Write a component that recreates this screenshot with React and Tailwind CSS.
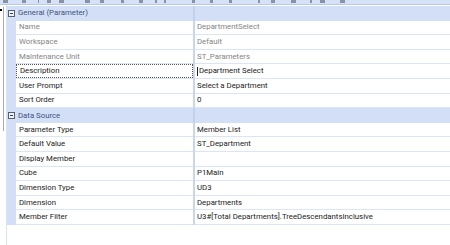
import React from 'react'

const sections = [
  {
    title: 'General (Parameter)',
    rows: [
      { label: 'Name', value: 'DepartmentSelect', readOnly: true },
      { label: 'Workspace', value: 'Default', readOnly: true },
      { label: 'Maintenance Unit', value: 'ST_Parameters', readOnly: true },
      { label: 'Description', value: 'Department Select', focused: true },
      { label: 'User Prompt', value: 'Select a Department' },
      { label: 'Sort Order', value: '0' },
    ],
  },
  {
    title: 'Data Source',
    rows: [
      { label: 'Parameter Type', value: 'Member List' },
      { label: 'Default Value', value: 'ST_Department' },
      { label: 'Display Member', value: '' },
      { label: 'Cube', value: 'P1Main' },
      { label: 'Dimension Type', value: 'UD3' },
      { label: 'Dimension', value: 'Departments' },
      { label: 'Member Filter', value: 'U3#[Total Departments].TreeDescendantsInclusive' },
    ],
  },
]

// bottoms of the toolbar icons that peek in at the top edge
const toolbarBits = [
  [3, 5], [22, 4], [38, 1], [47, 4], [59, 5], [85, 5], [100, 4], [121, 3], [139, 4],
  [155, 2], [164, 2], [192, 3], [210, 3], [229, 3], [258, 2], [271, 4], [291, 5],
  [310, 2], [320, 5], [340, 5],
]

const CollapseIcon = () => (
  <span className="flex h-[7px] w-[7px] items-center justify-center border border-[#5a5f6b] bg-[#eef2fa]">
    <span className="h-px w-[3px] bg-[#3a3f4a]" />
  </span>
)

const CategoryRow = ({ title }) => (
  <div className="flex h-[14.6px] bg-[#d3dff6]">
    <div className="flex w-[9px] shrink-0 items-center justify-end pr-px">
      <CollapseIcon />
    </div>
    <div className="flex w-[177px] shrink-0 items-center pl-[2px] text-[#41547c]">{title}</div>
    <div className="w-[2px] shrink-0 bg-[#c3d1ee]" />
    <div className="flex-1" />
  </div>
)

const PropertyRow = ({ label, value, readOnly, focused }) => {
  const tone = readOnly ? 'text-[#858585]' : 'text-[#222222]'
  return (
    <div className="flex h-[14.6px]">
      <div className="w-[9px] shrink-0 bg-[#d3dff6]" />
      <div className="flex w-[177px] shrink-0 border-b border-[#dce5f5]">
        <div
          className={`flex flex-1 items-center pl-[3px] ${tone} ${
            focused ? 'border border-dotted border-[#555]' : ''
          }`}
        >
          {label}
        </div>
      </div>
      <div className="w-[2px] shrink-0 bg-[#c9d6f0]" />
      <div className={`flex flex-1 items-center border-b border-[#dce5f5] pl-[2px] ${tone}`}>
        {focused && <span className="mr-px h-[9px] w-px bg-[#222]" />}
        {value}
      </div>
    </div>
  )
}

export default function App() {
  return (
    <div
      className="relative h-[245px] w-[450px] overflow-hidden whitespace-nowrap bg-white text-[7.8px] leading-none"
      style={{ fontFamily: 'Roboto, "Noto Sans", sans-serif' }}
    >
      <div className="relative h-[5px] border-b border-[#b9c8e6] bg-[#d6e2f7]">
        {toolbarBits.map(([x, w]) => (
          <span
            key={x}
            className="absolute top-0 h-[3px] bg-[#8b93a3]"
            style={{ left: x, width: w }}
          />
        ))}
      </div>

      <div className="flex h-[240px]">
        <div className="relative w-[6px] shrink-0">
          <span className="absolute left-0 top-[4px] h-[2px] w-[2px] bg-black" />
          <span className="absolute left-[3px] top-[2px] h-[124px] w-px bg-[#a8acb4]" />
        </div>
        <div className="flex-1 border-l border-[#dbe4f5] pt-px">
          {sections.map((s) => (
            <div key={s.title}>
              <CategoryRow title={s.title} />
              {s.rows.map((r) => (
                <PropertyRow key={r.label} {...r} />
              ))}
            </div>
          ))}
        </div>
      </div>
    </div>
  )
}
